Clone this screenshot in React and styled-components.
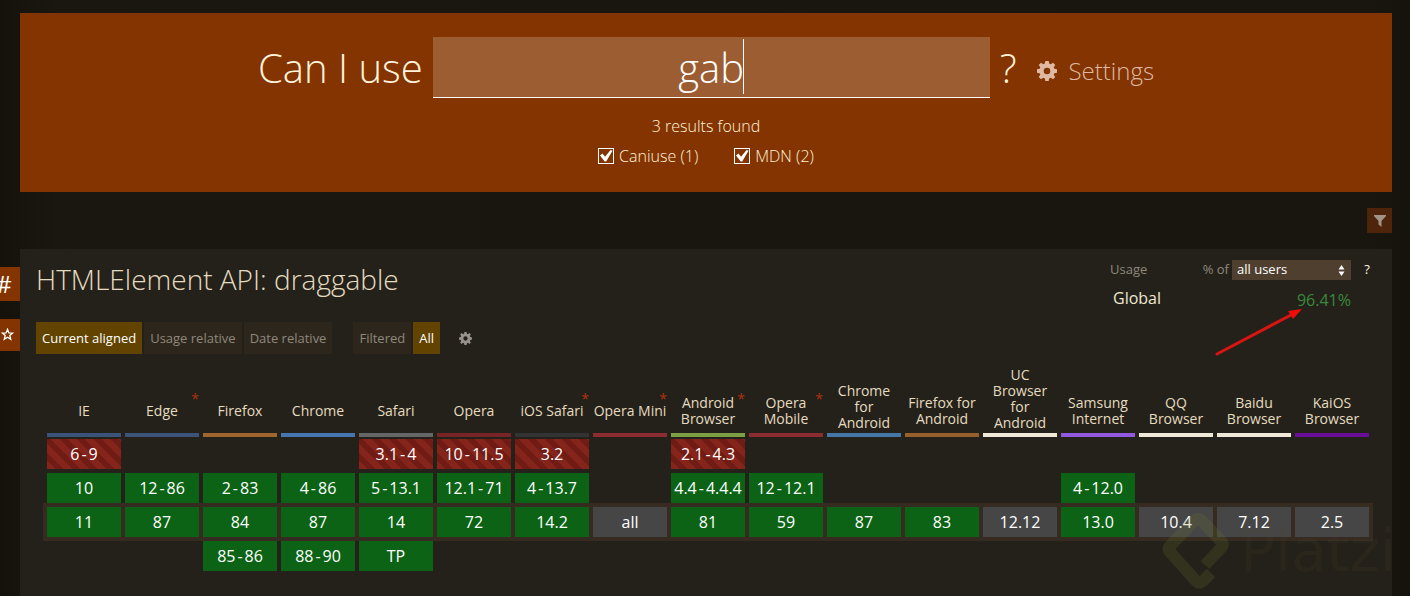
import React from 'react';
import styled, { createGlobalStyle, css } from 'styled-components';

const GlobalStyle = createGlobalStyle`
  *, *::before, *::after { box-sizing: border-box; }
  html { overflow: hidden; background: #18150e; }
  body {
    margin: 0;
    color: #e5dcc0;
    font-family: "Open Sans", "Noto Sans", sans-serif;
    font-size: 16px;
  }
  button, input, select { font: inherit; color: inherit; margin: 0; }
`;

const Page = styled.div`
  min-height: 100vh;
  display: flex;
  flex-direction: column;
  padding-top: 13px;
  background: linear-gradient(90deg, #14120b 0, #1a1710 60px, #19160f 97%, #16130c 100%);
`;

const Search = styled.form`
  margin: 0 18px 0 20px;
  padding: 24px 16px;
  min-height: 179px;
  background: #833400;
  color: #fff3dc;
  display: flex;
  flex-direction: column;
  align-items: center;
`;

const SearchRow = styled.div`
  display: flex;
  align-items: center;
  max-width: 100%;
`;

const BigText = styled.span`
  font-size: 40px;
  line-height: 60px;
  font-weight: 300;
  white-space: nowrap;
`;

const FieldWrap = styled.div`
  position: relative;
  flex: 0 1 557px;
  width: 557px;
  margin: 0 10px;
`;

const Field = styled.input`
  display: block;
  width: 100%;
  height: 61px;
  padding: 0;
  border: 0;
  border-bottom: 1px solid #fff;
  border-radius: 0;
  outline: 0;
  background: #9c5d33;
  color: #fff;
  font-size: 40px;
  font-weight: 300;
  text-align: center;
`;

const Caret = styled.span`
  position: absolute;
  top: 2px;
  left: calc(50% + 32px);
  width: 1px;
  height: 55px;
  background: #fff;
`;

const SettingsButton = styled.button`
  display: flex;
  align-items: center;
  gap: 11px;
  margin-left: 21px;
  padding: 7px 0 0;
  border: 0;
  background: none;
  color: #dfb9a2;
  font-size: 24px;
  line-height: 32px;
  font-weight: 300;
`;

const Results = styled.p`
  margin: 17px 0 0;
  line-height: 22px;
  font-weight: 300;
`;

const Sources = styled.div`
  display: flex;
  gap: 36px;
  margin-top: 8px;
  line-height: 22px;
  font-weight: 300;
`;

const Source = styled.label`
  display: flex;
  align-items: center;
  gap: 5px;
`;

const Tick = styled.span`
  position: relative;
  display: flex;
  input {
    appearance: none;
    width: 16px;
    height: 16px;
    border: 1px solid #fff;
  }
  svg {
    position: absolute;
    inset: 0;
    pointer-events: none;
    visibility: hidden;
  }
  input:checked + svg { visibility: visible; }
`;

const FilterBar = styled.div`
  display: flex;
  justify-content: flex-end;
  padding: 16px 18px 16px 20px;
`;

const FilterButton = styled.button`
  width: 25px;
  height: 25px;
  padding: 0;
  border: 0;
  display: grid;
  place-items: center;
  background: #4e250b;
  color: #a19488;
`;

const Main = styled.main`
  flex: 1;
  display: grid;
  grid-template-columns: 20px minmax(0, 1fr) 18px;
`;

const SideTabs = styled.nav`
  display: flex;
  flex-direction: column;
  align-items: flex-end;
  gap: 18px;
  padding-top: 18px;
  overflow: hidden;
`;

const tab = css`
  flex: none;
  width: 32px;
  border: 0;
  background: #833400;
  color: #fff;
  display: flex;
  align-items: center;
  justify-content: center;
`;

const HashLink = styled.a`
  ${tab}
  height: 34px;
  font-size: 24px;
  line-height: 32px;
  font-weight: 500;
  text-decoration: none;
`;

const StarButton = styled.button`
  ${tab}
  height: 32px;
  padding: 0 0 2px 6px;
`;

const Panel = styled.section`
  position: relative;
  background: #24211a;
`;

const PanelHead = styled.div`
  display: flex;
  justify-content: space-between;
  padding: 11px 16px 0;
`;

const Title = styled.h1`
  margin: 0;
  font-size: 28px;
  line-height: 38px;
  font-weight: 300;
`;

const Controls = styled.div`
  display: flex;
  align-items: center;
  margin-top: 24px;
`;

const Group = styled.div`
  display: flex;
  gap: 2px;
  margin-right: ${(p) => p.$after};
`;

const Option = styled.button`
  height: 32px;
  padding: 0 6px;
  border: 0;
  font-size: 13px;
  background: ${(p) => (p.$on ? '#624400' : '#2d261c')};
  color: ${(p) => (p.$on ? '#fff' : '#8e887d')};
`;

const IconButton = styled.button`
  display: flex;
  padding: 0;
  border: 0;
  background: none;
  color: #97928a;
`;

const Usage = styled.div`
  position: relative;
  display: grid;
  grid-template-columns: 1fr auto 119px 22px;
  column-gap: 3px;
  width: 266px;
  align-content: start;
  align-items: start;
  font-size: 13px;
  line-height: 18px;
  color: #8e887d;
`;

const SelectWrap = styled.div`
  position: relative;
  select {
    display: block;
    appearance: none;
    width: 100%;
    height: 20px;
    padding: 0 5px 2px;
    border: 0;
    border-radius: 0;
    background: #4f3f2e;
    color: #fff;
    line-height: 18px;
  }
  svg {
    position: absolute;
    right: 6px;
    top: 5px;
    pointer-events: none;
  }
`;

const Help = styled.a`
  justify-self: center;
  padding-left: 4px;
  color: #fff3dc;
  text-decoration: none;
`;

const Region = styled.span`
  padding: 7px 0 0 3px;
  font-size: 16px;
  line-height: 22px;
  color: #efe8d2;
`;

const Percent = styled.span`
  grid-column: 2 / 4;
  justify-self: end;
  padding-top: 9px;
  font-size: 16px;
  line-height: 22px;
  color: #388a3a;
`;

const Arrow = styled.svg`
  position: absolute;
  left: 105px;
  top: 48px;
`;

const Grid = styled.table`
  width: calc(100% - 46px);
  margin: 13px 21px 24px 25px;
  table-layout: fixed;
  border-collapse: separate;
  border-spacing: 0;
`;

const HeadCell = styled.th`
  padding: 0 2px;
  vertical-align: bottom;
  font-size: 14px;
  line-height: 16px;
  font-weight: 400;
`;

const Name = styled.div`
  position: relative;
  display: flex;
  align-items: center;
  justify-content: center;
  min-height: 46px;
  padding-bottom: 2px;
  border-bottom: 4px solid ${(p) => p.$color};
  white-space: ${(p) => (p.$oneLine ? 'nowrap' : 'normal')};
`;

const Note = styled.span`
  position: absolute;
  top: 0;
  right: 0;
  color: #b03010;
`;

const Row = styled.tr`
  ${(p) => p.$current && css`
    background: #352b21;
    outline: 2px solid #352b21;
  `}
`;

const Cell = styled.td`
  padding: 2px;
  height: 34px;
`;

const fills = {
  y: '#0c6315',
  u: '#464646',
  n: 'repeating-linear-gradient(45deg, #84241b 0, #84241b 6px, #701b13 6px, #701b13 12px)',
};

const Version = styled.div`
  height: 30px;
  line-height: 30px;
  text-align: center;
  white-space: nowrap;
  color: #fff;
  background: ${(p) => fills[p.$kind]};
`;

const Dash = styled.span`
  margin: 0 2px;
`;

const Watermark = styled.div`
  position: absolute;
  top: 262px;
  right: -4px;
  display: flex;
  align-items: center;
  gap: 10px;
  pointer-events: none;
  font-family: "DejaVu Sans", sans-serif;
  font-size: 58px;
  line-height: 80px;
  color: rgba(90, 75, 50, 0.12);
`;

const Gear = ({ size }) => (
  <svg width={size} height={size} viewBox="0 0 20 20" fill="currentColor" fillRule="evenodd" aria-hidden="true">
    <path d="M8.3 0h3.4l.5 2.6 1.6.7L16 1.7 18.3 4l-1.6 2.2.7 1.6 2.6.5v3.4l-2.6.5-.7 1.6 1.6 2.2L16 18.300l-2.200-1.600-1.600.7-.5 2.600H8.300l-.5-2.600-1.600-.7L4 18.300 1.700 16l1.600-2.200-.7-1.600L0 11.700V8.300l2.600-.5.7-1.600L1.700 4 4 1.700l2.200 1.600 1.600-.7zM10 6.700a3.300 3.300 0 1 0 0 6.600 3.300 3.300 0 0 0 0-6.600z" />
  </svg>
);

const browsers = [
  ['IE', '#3b5378', ['n6-9', 'y10', 'y11', '']],
  ['Edge', '#3b5378', ['', 'y12-86', 'y87', ''], true],
  ['Firefox', '#a0652c', ['', 'y2-83', 'y84', 'y85-86']],
  ['Chrome', '#4676b0', ['', 'y4-86', 'y87', 'y88-90']],
  ['Safari', '#666666', ['n3.1-4', 'y5-13.1', 'y14', 'yTP']],
  ['Opera', '#772427', ['n10-11.5', 'y12.1-71', 'y72', '']],
  ['iOS Safari', '#333333', ['n3.2', 'y4-13.7', 'y14.2', ''], true],
  ['Opera Mini', '#8c2c30', ['', '', 'uall', ''], true],
  ['Android Browser', '#7d9f43', ['n2.1-4.3', 'y4.4-4.4.4', 'y81', ''], true],
  ['Opera Mobile', '#8c2c30', ['', 'y12-12.1', 'y59', ''], true],
  ['Chrome for Android', '#4676a8', ['', '', 'y87', '']],
  ['Firefox for Android', '#965f2c', ['', '', 'y83', '']],
  ['UC Browser for Android', '#efe8d8', ['', '', 'u12.12', '']],
  ['Samsung Internet', '#9158e0', ['', 'y4-12.0', 'y13.0', '']],
  ['QQ Browser', '#efe8d8', ['', '', 'u10.4', '']],
  ['Baidu Browser', '#efe8d8', ['', '', 'u7.12', '']],
  ['KaiOS Browser', '#680e98', ['', '', 'u2.5', '']],
];

function VersionCell({ value }) {
  if (!value) return <Cell />;
  const [from, to] = value.slice(1).split('-');
  return (
    <Cell>
      <Version $kind={value[0]}>
        {from}
        {to && <><Dash>-</Dash>{to}</>}
      </Version>
    </Cell>
  );
}

function SourceOption({ label }) {
  return (
    <Source>
      <Tick>
        <input type="checkbox" defaultChecked />
        <svg width="16" height="16" viewBox="0 0 16 16" fill="#fff" aria-hidden="true">
          <path d="M2 7.500L4.500 5.600 7 8.700 12.600 2 14.500 2.800 8.200 13.500H6.700z" />
        </svg>
      </Tick>
      {label}
    </Source>
  );
}

export default function App() {
  return (
    <>
      <GlobalStyle />
      <Page>
        <Search onSubmit={(e) => e.preventDefault()}>
          <SearchRow>
            <BigText as="label" htmlFor="feature">Can I use</BigText>
            <FieldWrap>
              <Field id="feature" type="text" defaultValue="gab" autoComplete="off" />
              <Caret />
            </FieldWrap>
            <BigText>?</BigText>
            <SettingsButton type="button"><Gear size={20} />Settings</SettingsButton>
          </SearchRow>
          <Results>3 results found</Results>
          <Sources>
            <SourceOption label="Caniuse (1)" />
            <SourceOption label="MDN (2)" />
          </Sources>
        </Search>
        <FilterBar>
          <FilterButton type="button" aria-label="Filter">
            <svg width="12" height="12" viewBox="0 0 12 12" fill="currentColor" aria-hidden="true">
              <path d="M0 0h12v1L7.500 6v6L4.500 9.500V6L0 1z" />
            </svg>
          </FilterButton>
        </FilterBar>
        <Main>
          <SideTabs>
            <HashLink href="#draggable">#</HashLink>
            <StarButton type="button" aria-label="Star">
              <svg width="13" height="13" viewBox="0 0 12 12" fill="none" stroke="#fff" strokeWidth="1.200" aria-hidden="true">
                <path d="M6 1.200l1.300 3.300 3.500.2-2.700 2.200.9 3.500L6 8.500l-3 1.900.9-3.500L1.200 4.700l3.500-.2z" />
              </svg>
            </StarButton>
          </SideTabs>
          <Panel id="draggable">
            <PanelHead>
              <div>
                <Title>HTMLElement API: draggable</Title>
                <Controls>
                  <Group $after="21px">
                    <Option type="button" $on>Current aligned</Option>
                    <Option type="button">Usage relative</Option>
                    <Option type="button">Date relative</Option>
                  </Group>
                  <Group $after="19px">
                    <Option type="button">Filtered</Option>
                    <Option type="button" $on>All</Option>
                  </Group>
                  <IconButton type="button" aria-label="Table settings"><Gear size={13} /></IconButton>
                </Controls>
              </div>
              <Usage>
                <span>Usage</span>
                <label htmlFor="users">% of</label>
                <SelectWrap>
                  <select id="users"><option>all users</option></select>
                  <svg width="7" height="11" viewBox="0 0 7 11" fill="#fff" aria-hidden="true">
                    <path d="M3.500 0L6.500 4.500h-6zM3.500 11L.5 6.500h6z" />
                  </svg>
                </SelectWrap>
                <Help href="#usage-help">?</Help>
                <Region>Global</Region>
                <Percent>96.41%</Percent>
                <Arrow width="90" height="50" viewBox="0 0 90 50" aria-hidden="true">
                  <path d="M2 46L76 7" stroke="#d81510" strokeWidth="3" strokeLinecap="round" />
                  <path d="M87 1L78 11 73 3z" fill="#f00c08" />
                </Arrow>
              </Usage>
            </PanelHead>
            <Grid>
              <thead>
                <tr>
                  {browsers.map(([name, color, , note]) => (
                    <HeadCell key={name} scope="col">
                      <Name $color={color} $oneLine={/^(iOS|Opera Mini)/.test(name)}>
                        {name}
                        {note && <Note>*</Note>}
                      </Name>
                    </HeadCell>
                  ))}
                </tr>
              </thead>
              <tbody>
                {[0, 1, 2, 3].map((i) => (
                  <Row key={i} $current={i === 2}>
                    {browsers.map(([name, , versions]) => (
                      <VersionCell key={name} value={versions[i]} />
                    ))}
                  </Row>
                ))}
              </tbody>
            </Grid>
            <Watermark aria-hidden="true">
              <svg width="68" height="80" viewBox="0 0 68 80" fill="none" stroke="rgba(110,130,40,0.19)" strokeWidth="12" strokeLinejoin="round">
                <path d="M43 54L60 36Q62 33 59 30L40 10Q36 6 32 10L8 35Q5 38 8 41L34 70Q37 73 41 70L49 62" />
              </svg>
              <span>Platzi</span>
            </Watermark>
          </Panel>
        </Main>
      </Page>
    </>
  );
}
